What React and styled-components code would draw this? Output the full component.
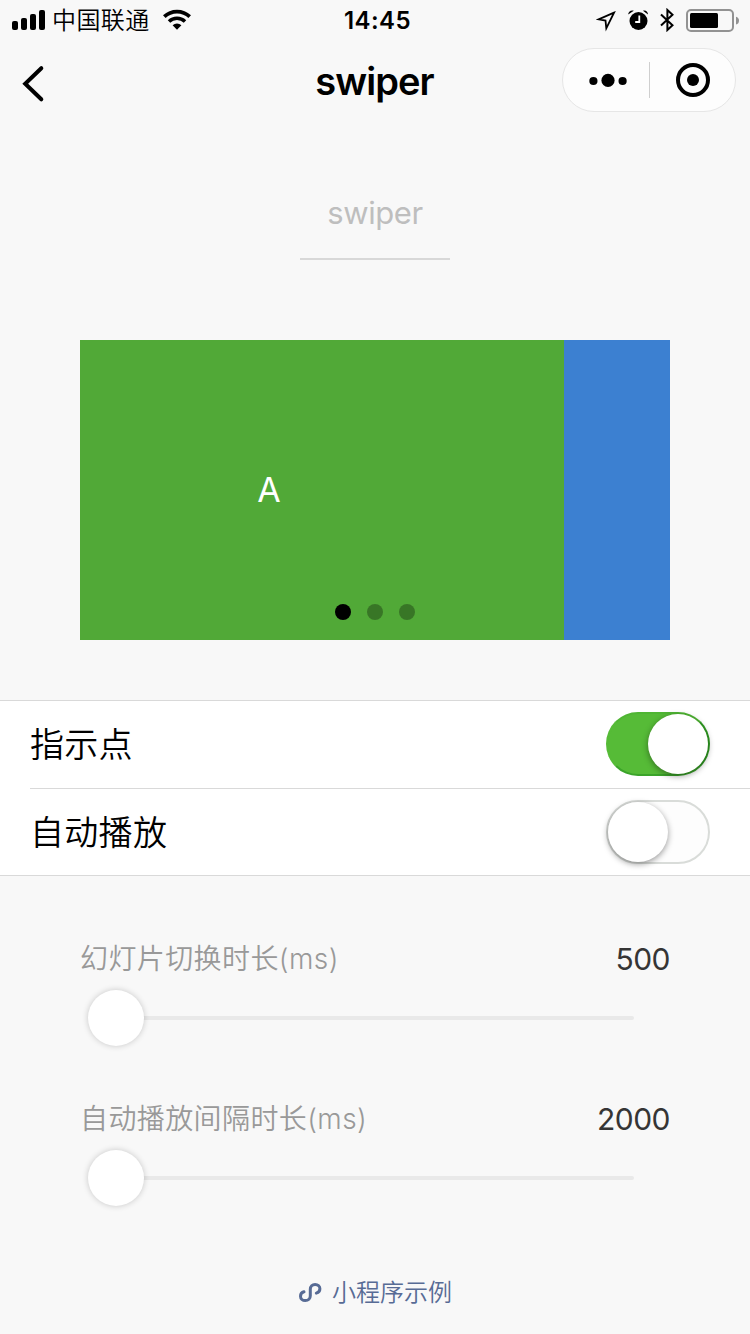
import React, { useState } from 'react'
import styled, { createGlobalStyle } from 'styled-components'

const GlobalStyle = createGlobalStyle`
  * {
    box-sizing: border-box;
  }

  body {
    margin: 0;
    background: #f8f8f8;
    font-family: Inter, "Noto Sans CJK SC", sans-serif;
    color: #000;
  }
`

const Page = styled.div`
  display: flex;
  flex-direction: column;
  width: 750px;
  height: 1334px;
  overflow: hidden;
  background: #f8f8f8;
`

const StatusBar = styled.div`
  display: grid;
  grid-template-columns: 1fr auto 1fr;
  align-items: center;
  height: 40px;
  padding: 0 11px 0 12px;
`

const StatusGroup = styled.div`
  display: flex;
  align-items: center;
  justify-content: ${props => props.$end ? 'flex-end' : 'flex-start'};
  gap: ${props => props.$end ? '12px' : '0'};
  height: 40px;

  svg {
    display: block;
    flex: none;
  }
`

const Carrier = styled.span`
  margin: 0 13px 0 6px;
  padding-top: 2px;
  font-size: 24px;
  font-weight: 350;
  line-height: 38px;
  letter-spacing: 0.4px;
`

const Clock = styled.span`
  padding: 2px 0 0 4px;
  font-size: 24px;
  font-weight: 600;
  line-height: 38px;
  letter-spacing: 0.4px;
`

const NavBar = styled.header`
  display: grid;
  grid-template-columns: 1fr auto 1fr;
  align-items: center;
  height: 80px;
  padding: 0 14px 0 20px;
`

const BackButton = styled.button`
  display: flex;
  width: 28px;
  margin-top: 7px;
  padding: 0;
  border: 0;
  background: none;
`

const NavTitle = styled.h1`
  margin: 2px 0 0 -7px;
  font-size: 38px;
  font-weight: 600;
  line-height: 48px;
  letter-spacing: -0.9px;
`

const Capsule = styled.div`
  display: grid;
  grid-template-columns: 86px 86px;
  align-items: center;
  justify-self: end;
  width: 174px;
  height: 64px;
  border: 1px solid #e6e6e6;
  border-radius: 32px;
  background: #fdfdfd;
`

const CapsuleButton = styled.button`
  display: flex;
  align-items: center;
  justify-content: center;
  height: 36px;
  padding: 0 0 0 3px;
  border: 0;
  background: none;

  & + & {
    padding-left: 0;
    border-left: 1px solid #cfcfcf;
  }
`

const PageHead = styled.div`
  display: flex;
  justify-content: center;
  height: 220px;
  padding-top: 70px;
`

const PageTitle = styled.div`
  width: 150px;
  height: 70px;
  border-bottom: 2px solid #d8d8d8;
  color: #bebebe;
  font-size: 31px;
  line-height: 46px;
  letter-spacing: -0.4px;
  text-align: center;
`

const Swiper = styled.div`
  position: relative;
  display: flex;
  width: 590px;
  height: 300px;
  margin: 0 80px 60px;
  overflow: hidden;
`

const Slide = styled.div`
  flex: none;
  width: 484px;
  padding-right: 106px;
  background: ${props => props.$color};
  color: #fff;
  font-size: 34px;
  line-height: 300px;
  text-align: center;
`

const Dots = styled.div`
  position: absolute;
  bottom: 20px;
  left: 0;
  display: flex;
  justify-content: center;
  gap: 16px;
  width: 100%;
`

const Dot = styled.span`
  width: 16px;
  height: 16px;
  border-radius: 50%;
  background: ${props => props.$active ? '#000' : 'rgba(0, 0, 0, 0.3)'};
`

const Cells = styled.div`
  height: 176px;
  border-top: 1px solid #d9d9d9;
  border-bottom: 1px solid #d9d9d9;
  background: #fff;
`

const Cell = styled.div`
  display: flex;
  align-items: flex-start;
  justify-content: space-between;
  height: 87px;
  margin-left: 30px;
  padding: 11px 40px 0 0;

  & + & {
    height: 88px;
    border-top: 1px solid #d9d9d9;
  }
`

const CellLabel = styled.span`
  font-size: 34px;
  font-weight: 350;
  line-height: 66px;
  letter-spacing: 0.3px;
`

const Switch = styled.button`
  display: flex;
  justify-content: ${props => props.$on ? 'flex-end' : 'flex-start'};
  width: 104px;
  height: 64px;
  padding: 0;
  border: 2px solid;
  border-color: ${props => props.$on ? '#4fb533 #2f9c22 #3ba42a #56bb37' : '#d9dcd9'};
  border-radius: 32px;
  background: ${props => props.$on ? '#56bb37' : '#fdfdfd'};
`

const Knob = styled.span`
  width: 60px;
  height: 60px;
  border-radius: 50%;
  background: #fff;
  box-shadow: 0 2px 6px rgba(0, 0, 0, 0.4);
`

const Sliders = styled.div`
  display: flex;
  flex-direction: column;
  gap: 48px;
  padding: 60px 80px 0;
`

const SliderHead = styled.div`
  display: flex;
  align-items: center;
  justify-content: space-between;
  height: 46px;
`

const SliderLabel = styled.span`
  padding-bottom: 4px;
  color: #999;
  font-size: 28px;
  font-weight: 350;
  letter-spacing: 0.4px;
`

const SliderValue = styled.span`
  color: #353535;
  font-size: 30px;
  letter-spacing: -0.5px;
`

const SliderControl = styled.div`
  display: flex;
  align-items: center;
  height: 60px;
  margin: 6px 36px 0 8px;
`

const Handle = styled.span`
  z-index: 1;
  flex: none;
  width: 56px;
  height: 56px;
  border-radius: 50%;
  background: #fff;
  box-shadow: 0 0 6px rgba(0, 0, 0, 0.2);
`

const Track = styled.span`
  flex: 1;
  height: 4px;
  margin-left: -28px;
  border-radius: 2px;
  background: #e9e9e9;
`

const Footer = styled.footer`
  display: flex;
  align-items: center;
  justify-content: center;
  gap: 10px;
  margin: auto 0 23px;
  color: #576b95;
  font-size: 24px;
  font-weight: 350;
  line-height: 36px;
`

const SignalIcon = () => (
  <svg width="34" height="24" viewBox="0 0 34 24">
    <rect x="0" y="13" width="6" height="9" rx="2" />
    <rect x="9" y="10" width="6" height="12" rx="2" />
    <rect x="18" y="6" width="6" height="16" rx="2" />
    <rect x="27" y="2" width="6" height="20" rx="2" />
  </svg>
)

const WifiIcon = () => (
  <svg width="28" height="22" viewBox="0 0 28 22" fill="none" stroke="#000">
    <path d="M1.3 7.7a18.2 18.2 0 0 1 25.4 0" strokeWidth="3.7" />
    <path d="M6 12.6a11.5 11.5 0 0 1 16 0" strokeWidth="3.5" />
    <path d="M14 20.7 9.6 16.3a6.4 6.4 0 0 1 8.8 0Z" fill="#000" stroke="none" />
  </svg>
)

const LocationIcon = () => (
  <svg width="20" height="24" viewBox="0 0 20 24" fill="none" stroke="#000" strokeWidth="1.8">
    <path d="M18 4.7 2.5 11.3l7 1.2.8 7.8Z" />
  </svg>
)

const AlarmIcon = () => (
  <svg width="20" height="22" viewBox="0 0 20 22">
    <circle cx="10.5" cy="12" r="9" />
    <path d="M.2 5.6C.2 2.8 2.8.6 5.8 1.7ZM20 5.6C20 2.8 17.7.6 15 1.7Z" />
    <path d="M11.3 6.5V13H7.2" fill="none" stroke="#fff" strokeWidth="1.8" />
  </svg>
)

const BluetoothIcon = () => (
  <svg width="14" height="24" viewBox="0 0 14 24" fill="none" stroke="#000" strokeWidth="2">
    <path d="m1 6.5 11.5 10.7L7.4 22V2l5.1 4.8L1 17.5" />
  </svg>
)

const BatteryIcon = () => (
  <svg width="53" height="24" viewBox="0 0 53 24">
    <rect x="1" y="2" width="46" height="21" rx="4" fill="none" stroke="#929292" strokeWidth="2" />
    <rect x="4" y="5" width="28" height="15" rx="1.5" />
    <path d="M50 8.8c2 .5 3 2 3 3.9s-1 3.4-3 3.9Z" fill="#929292" />
  </svg>
)

const BackIcon = () => (
  <svg width="28" height="38" viewBox="0 0 28 38" fill="none" stroke="#000" strokeWidth="4" strokeLinecap="round">
    <path d="M21.3 3.2 5.2 18.7 21.3 34.3" />
  </svg>
)

const MoreIcon = () => (
  <svg width="38" height="14" viewBox="0 0 38 14">
    <circle cx="4.4" cy="8" r="4.1" />
    <circle cx="19" cy="7.4" r="6.6" />
    <circle cx="33.6" cy="8" r="4.1" />
  </svg>
)

const CloseIcon = () => (
  <svg width="34" height="34" viewBox="0 0 34 34">
    <circle cx="17" cy="17" r="15" fill="none" stroke="#000" strokeWidth="4" />
    <circle cx="17" cy="17" r="6" />
  </svg>
)

const MiniProgramIcon = () => (
  <svg width="24" height="22" viewBox="0 0 24 22" fill="none" stroke="currentColor" strokeWidth="3" strokeLinecap="round">
    <path d="M6 9.8C3.8 10.4 2.5 12 2.5 14.2c0 2.6 2.1 4.4 4.8 4.4 3 0 5-2 5-4.9V7.2c0-2.9 2-4.8 4.8-4.8 2.7 0 4.8 1.7 4.8 4.3 0 2.1-1.4 3.8-3.6 4.4" />
  </svg>
)

const SliderItem = ({ label, value }) => (
  <div>
    <SliderHead>
      <SliderLabel>{label}</SliderLabel>
      <SliderValue>{value}</SliderValue>
    </SliderHead>
    <SliderControl>
      <Handle />
      <Track />
    </SliderControl>
  </div>
)

const App = () => {
  const [indicatorDots, setIndicatorDots] = useState(true)
  const [autoplay, setAutoplay] = useState(false)

  return (
    <Page>
      <GlobalStyle />
      <StatusBar>
        <StatusGroup>
          <SignalIcon />
          <Carrier>中国联通</Carrier>
          <WifiIcon />
        </StatusGroup>
        <Clock>14:45</Clock>
        <StatusGroup $end>
          <LocationIcon />
          <AlarmIcon />
          <BluetoothIcon />
          <BatteryIcon />
        </StatusGroup>
      </StatusBar>
      <NavBar>
        <BackButton aria-label="返回"><BackIcon /></BackButton>
        <NavTitle>swiper</NavTitle>
        <Capsule>
          <CapsuleButton><MoreIcon /></CapsuleButton>
          <CapsuleButton><CloseIcon /></CapsuleButton>
        </Capsule>
      </NavBar>
      <PageHead>
        <PageTitle>swiper</PageTitle>
      </PageHead>
      <Swiper>
        <Slide $color="#51a937">A</Slide>
        <Slide $color="#3c80d1" />
        {indicatorDots && (
          <Dots>
            <Dot $active />
            <Dot />
            <Dot />
          </Dots>
        )}
      </Swiper>
      <Cells>
        <Cell>
          <CellLabel>指示点</CellLabel>
          <Switch $on={indicatorDots} onClick={() => setIndicatorDots(!indicatorDots)}><Knob /></Switch>
        </Cell>
        <Cell>
          <CellLabel>自动播放</CellLabel>
          <Switch $on={autoplay} onClick={() => setAutoplay(!autoplay)}><Knob /></Switch>
        </Cell>
      </Cells>
      <Sliders>
        <SliderItem label="幻灯片切换时长(ms)" value={500} />
        <SliderItem label="自动播放间隔时长(ms)" value={2000} />
      </Sliders>
      <Footer>
        <MiniProgramIcon />
        小程序示例
      </Footer>
    </Page>
  )
}

export default App
